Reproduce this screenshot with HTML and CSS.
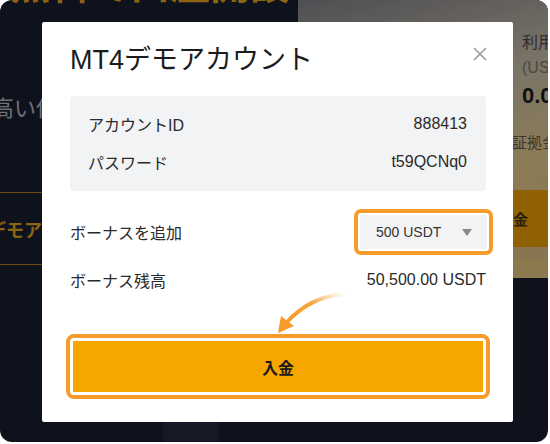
FILE: index.html
```html
<!DOCTYPE html>
<html lang="ja">
  <head>
    <meta charset="UTF-8" />
    <meta name="viewport" content="width=device-width, initial-scale=1.0" />
    <title>MT4デモアカウント</title>
    <link rel="stylesheet" href="styles.css">
  </head>
  <body>
    <div class="screen">
      <div class="page">
        <div class="hero-left">
          <div class="hero-title">無料で口座開設</div>
          <p class="hero-sub">高い信頼性</p>
          <div class="hero-tab">デモアカウント</div>
          <div class="hero-foot"></div>
        </div>
        <div class="hero-right">
          <div class="stat">
            <p class="stat-label">利用可能</p>
            <p class="stat-unit">(USDT)</p>
            <p class="stat-value">0.00</p>
            <p class="stat-note">証拠金</p>
          </div>
          <div class="stat-band">入金</div>
          <div class="stat-foot"></div>
        </div>
      </div>

      <div class="modal">
        <div class="modal-head">
          <h1>MT4デモアカウント</h1>
          <svg class="close" width="14" height="14" viewBox="0 0 14 14">
            <path d="M1 1L13 13M13 1L1 13" stroke="#9a9a9a" stroke-width="1.6" fill="none" />
          </svg>
        </div>

        <div class="info">
          <div class="info-row"><span>アカウントID</span><span>888413</span></div>
          <div class="info-row"><span>パスワード</span><span>t59QCNq0</span></div>
        </div>

        <div class="row">
          <span>ボーナスを追加</span>
          <div class="ring ring-select">
            <div class="select">
              <span>500 USDT</span>
              <span class="caret"></span>
            </div>
          </div>
        </div>

        <div class="row row-balance">
          <span>ボーナス残高</span>
          <span>50,500.00 USDT</span>
        </div>

        <svg class="arrow" width="80" height="50" viewBox="0 0 80 50">
          <defs>
            <linearGradient id="fade" x1="1" y1="0" x2="0" y2="1">
              <stop offset="0" stop-color="#f59c2a" stop-opacity="0" />
              <stop offset="0.45" stop-color="#f59c2a" stop-opacity="0.9" />
              <stop offset="1" stop-color="#f59c2a" />
            </linearGradient>
          </defs>
          <path d="M73 5 Q40 8 17 33" stroke="url(#fade)" stroke-width="4" fill="none" stroke-linecap="round" />
          <path d="M8 44 L11 27 L24 37 Z" fill="#f59c2a" />
        </svg>

        <div class="ring ring-button">
          <button class="btn">入金</button>
        </div>
      </div>
    </div>
  </body>
</html>
```

FILE: styles.css
```css
body {
  margin: 0;
  background: #fff;
  font-family: 'Liberation Sans', 'Noto Sans CJK JP', sans-serif;
}
p {
  margin: 0;
}
.screen {
  position: relative;
  width: 548px;
  height: 442px;
  border-radius: 12px;
  overflow: hidden;
  background: #0e121d;
}
.page {
  display: flex;
  height: 100%;
}
.hero-left {
  width: 298px;
  flex-shrink: 0;
  overflow: hidden;
}
.hero-title {
  margin: -40px 0 0 10px;
  font-size: 40px;
  line-height: 50px;
  font-weight: bold;
  color: #8c6412;
  white-space: nowrap;
}
.hero-sub {
  margin: 86px 0 0 -8px;
  font-size: 22px;
  line-height: 26px;
  color: #6f7078;
  white-space: nowrap;
}
.hero-tab {
  margin-top: 70px;
  height: 71px;
  display: flex;
  align-items: center;
  margin-left: -12px;
  border-top: 1px solid #6b4d14;
  border-bottom: 1px solid #6b4d14;
  font-size: 18px;
  font-weight: bold;
  color: #8c6412;
  white-space: nowrap;
}
.hero-foot {
  margin: 157px 0 0 163px;
  width: 55px;
  height: 30px;
  background: #161a26;
}
.hero-right {
  flex: 1;
  height: 278px;
  border-radius: 0 12px 0 0;
  background: linear-gradient(165deg, #4f4f53 0%, #7a7468 35%, #8a7b58 60%, #8d7a4a 100%);
  display: flex;
  flex-direction: column;
}
.stat {
  padding: 32px 0 0 224px;
  height: 158px;
  box-sizing: border-box;
  white-space: nowrap;
}
.stat-label {
  font-size: 16px;
  line-height: 22px;
  color: #2e2d2b;
}
.stat-unit {
  margin-top: 3px;
  font-size: 16px;
  line-height: 22px;
  color: #4b4842;
}
.stat-value {
  margin-top: 4px;
  font-size: 22px;
  line-height: 26px;
  font-weight: bold;
  color: #111;
}
.stat-note {
  margin: 22px 0 0 -10px;
  font-size: 15px;
  color: #3b362c;
}
.stat-band {
  margin-top: 32px;
  height: 57px;
  background: #8f6102;
  padding-left: 200px;
  display: flex;
  align-items: center;
  font-weight: bold;
  font-size: 15px;
  color: #2a1f08;
  white-space: nowrap;
}
.stat-foot {
  flex: 1;
  background: #8c7a4e;
  border-top: 12px solid #877651;
}
.modal {
  position: absolute;
  left: 42px;
  top: 22px;
  width: 471px;
  height: 400px;
  box-sizing: border-box;
  padding: 18px 27px 0 28px;
  background: #fff;
  border-radius: 2px;
  color: #222;
}
.modal-head {
  display: flex;
  justify-content: space-between;
  align-items: center;
  height: 34px;
  margin-bottom: 22px;
}
.modal-head h1 {
  margin: 0;
  font-size: 27px;
  font-weight: normal;
  color: #1c1c1c;
}
.close {
  margin-right: -1px;
  margin-top: -6px;
}
.info {
  background: #f2f3f5;
  border-radius: 4px;
  padding: 9px 19px 10px 18px;
}
.info-row {
  display: flex;
  justify-content: space-between;
  align-items: center;
  height: 38px;
  font-size: 16px;
  color: #2a2a2a;
}
.row {
  display: flex;
  justify-content: space-between;
  align-items: center;
  margin-top: 18px;
  margin-right: -7px;
  font-size: 16px;
  color: #2a2a2a;
}
.row-balance {
  margin-top: 13px;
  margin-right: 0;
  height: 24px;
}
.ring {
  border: 4px solid #f59c2a;
  border-radius: 7px;
  padding: 2px;
  background: #fff;
}
.select {
  width: 127px;
  height: 34px;
  box-sizing: border-box;
  padding: 0 15px 0 16px;
  background: #f2f3f5;
  display: flex;
  justify-content: space-between;
  align-items: center;
  font-size: 14px;
  color: #333;
}
.caret {
  width: 0;
  height: 0;
  border-left: 5px solid transparent;
  border-right: 5px solid transparent;
  border-top: 7px solid #888;
}
.arrow {
  position: absolute;
  left: 228px;
  top: 267px;
}
.ring-button {
  margin: 42px -4px 0;
  padding: 3px;
  border-radius: 8px;
}
.btn {
  display: block;
  width: 100%;
  height: 51px;
  border: 0;
  background: #f7a600;
  font-family: inherit;
  font-size: 16px;
  font-weight: bold;
  color: #1a1a1a;
}
```
